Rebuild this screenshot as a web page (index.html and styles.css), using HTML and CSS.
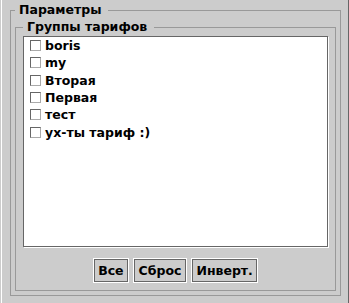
FILE: index.html
```html
<!DOCTYPE html>
<html lang="ru">
<head>
  <meta charset="UTF-8" />
  <title>Параметры</title>
  <link rel="stylesheet" href="styles.css">
</head>
<body>
  <div class="panel">
    <fieldset class="params">
      <legend>Параметры</legend>
      <fieldset class="groups">
        <legend>Группы тарифов</legend>
        <div class="list" id="groupList"></div>
        <div class="buttons">
          <button onclick="setAll(true)">Все</button>
          <button onclick="setAll(false)">Сброс</button>
          <button onclick="invert()">Инверт.</button>
        </div>
      </fieldset>
    </fieldset>
  </div>

  <script>
    const groups = ["boris", "my", "Вторая", "Первая", "тест", "ух-ты тариф :)"];

    const list = document.getElementById("groupList");
    groups.forEach(name => {
      const label = document.createElement("label");
      label.className = "item";
      label.innerHTML = `<input type="checkbox" /><span>${name}</span>`;
      list.appendChild(label);
    });

    function boxes() {
      return list.querySelectorAll("input");
    }

    function setAll(val) {
      boxes().forEach(b => b.checked = val);
    }

    function invert() {
      boxes().forEach(b => b.checked = !b.checked);
    }
  </script>
</body>
</html>
```

FILE: styles.css
```css
html, body {
  height: 100%;
}
body {
  margin: 0;
  padding-left: 1px;
  background-color: #cccccc;
  font-family: 'DejaVu Sans', sans-serif;
  font-size: 12.5px;
  font-weight: bold;
  color: #000;
  overflow: hidden;
}
.panel {
  box-sizing: border-box;
  height: 100%;
  border-left: 1px solid #fff;
  border-right: 1px solid #666;
  padding-top: 3px;
}
fieldset {
  margin: 0;
  border: 1px solid #999;
  min-width: 0;
}
legend {
  padding: 0 7px 0 4px;
  line-height: 14px;
}
.params {
  margin: 0 7px 0 8px;
  padding: 3px 4px 4px 4px;
}
.groups {
  padding: 2px 7px 8px 7px;
}
.list {
  height: 209px;
  background-color: #fff;
  border: 1px solid #666;
  box-shadow: 1px 1px 0 #fff;
  padding-left: 6px;
}
.item {
  display: flex;
  align-items: center;
  height: 17.33px;
  line-height: 17.33px;
  white-space: nowrap;
}
.item input {
  appearance: none;
  -webkit-appearance: none;
  box-sizing: border-box;
  flex: none;
  width: 11px;
  height: 11px;
  margin: 0 4px 0 0;
  border: 1px solid;
  border-color: #666 #aaa #aaa #666;
  background-color: #fff;
}
.item input:checked {
  background: #fff linear-gradient(#333, #333) center / 5px 5px no-repeat;
}
.buttons {
  display: flex;
  justify-content: center;
  gap: 6px;
  margin-top: 12px;
}
.buttons button {
  height: 23px;
  padding: 0 3.5px;
  line-height: 21px;
  font: inherit;
  color: #000;
  background-color: #cccccc;
  border: 1px solid #666;
  box-shadow: 0 0 0 1px #fff;
  border-radius: 0;
  cursor: pointer;
}
```
